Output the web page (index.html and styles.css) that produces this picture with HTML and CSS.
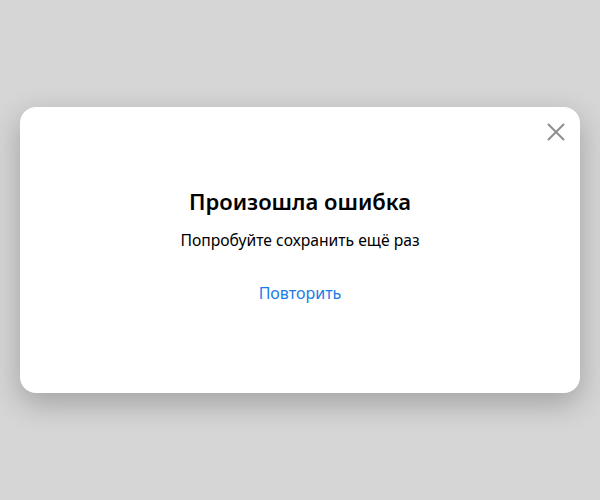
FILE: index.html
```
<!DOCTYPE html>
<html lang="ru">
<head>
<meta charset="utf-8">
<link rel="stylesheet" href="styles.css">
</head>
<body>
<div class="overlay">
  <div class="modal">
    <button class="close" aria-label="Закрыть">
      <svg width="18" height="18" viewBox="0 0 18 18"><path d="M1 1L17 17M17 1L1 17" stroke="#8f8f8f" stroke-width="2" fill="none"/></svg>
    </button>
    <h1 class="title">Произошла ошибка</h1>
    <p class="text">Попробуйте сохранить ещё раз</p>
    <a class="retry" href="#">Повторить</a>
  </div>
</div>
</body>
</html>
```
FILE: styles.css
```
html, body {
  margin: 0;
  height: 100%;
}
body {
  background: #d6d6d6;
  font-family: "Noto Sans", "Open Sans", sans-serif;
}
.overlay {
  height: 100%;
  display: flex;
  align-items: center;
  justify-content: center;
}
.modal {
  position: relative;
  box-sizing: border-box;
  width: 560px;
  height: 286px;
  background: #fff;
  border-radius: 16px;
  box-shadow: 0 10px 30px rgba(0,0,0,0.25);
  display: flex;
  flex-direction: column;
  align-items: center;
  padding-top: 79px;
}
.close {
  position: absolute;
  top: 16px;
  right: 15px;
  width: 18px;
  height: 18px;
  padding: 0;
  border: 0;
  background: none;
}
.close svg { display: block; }
.title {
  margin: 0;
  font-size: 22px;
  font-weight: 600;
  line-height: 30px;
  color: #000;
}
.text {
  margin: 14px 0 0;
  font-size: 15.7px;
  line-height: 20px;
  color: #000;
}
.retry {
  margin-top: 33px;
  font-size: 16px;
  line-height: 20px;
  color: #1a7ce8;
  text-decoration: none;
}
```
